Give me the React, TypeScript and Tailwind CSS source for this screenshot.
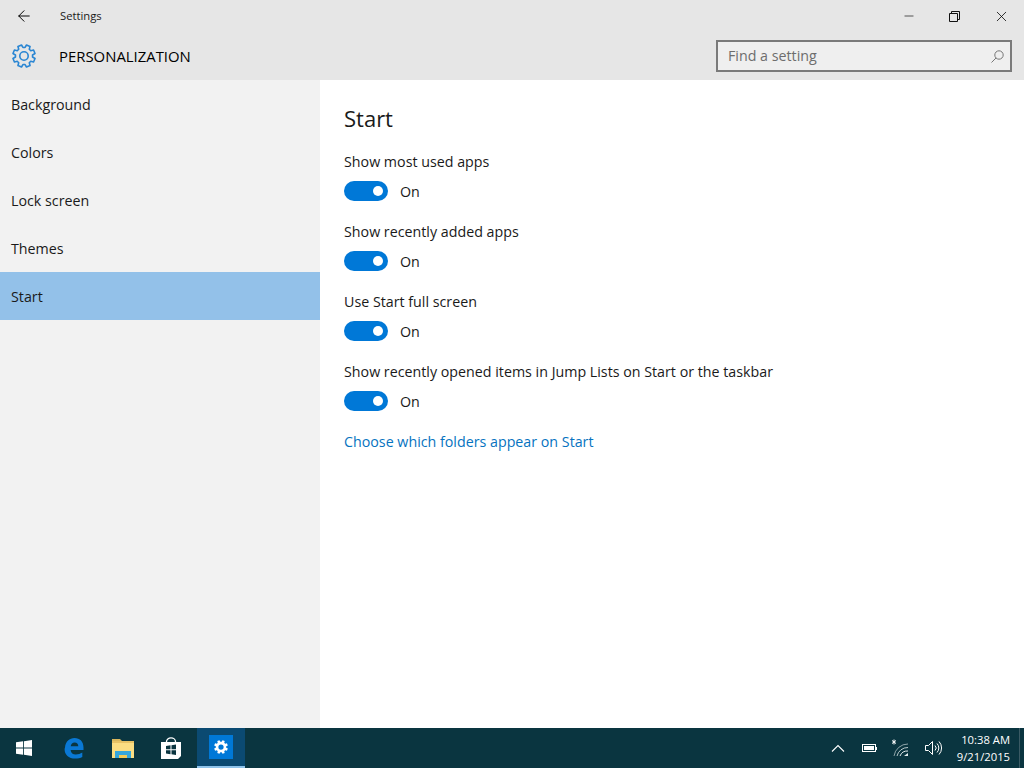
import { ArrowLeft, Minus, X } from "lucide-react";

const font = "font-['Open_Sans','Noto_Sans',sans-serif]";

const navItems = ["Background", "Colors", "Lock screen", "Themes", "Start"];
const toggles = [
  "Show most used apps",
  "Show recently added apps",
  "Use Start full screen",
  "Show recently opened items in Jump Lists on Start or the taskbar",
];

// 8 tooth gear outline, centred on 12,12
function gearPath(outer: number, inner: number) {
  const pts: string[] = [];
  for (let i = 0; i < 8; i++) {
    const a = (i * Math.PI) / 4 + Math.PI / 8;
    const at = (r: number, d: number) =>
      `${(12 + r * Math.cos(a + d)).toFixed(2)} ${(12 + r * Math.sin(a + d)).toFixed(2)}`;
    pts.push(at(inner, -0.27), at(outer, -0.17), at(outer, 0.17), at(inner, 0.27));
  }
  return "M" + pts.join("L") + "Z";
}

function Gear({ size, solid }: { size: number; solid?: boolean }) {
  if (solid) {
    return (
      <svg width={size} height={size} viewBox="0 0 24 24">
        <path d={gearPath(12, 9) + "M12 7.500a4.500 4.500 0 1 0 0 9a4.500 4.500 0 1 0 0-9Z"} fill="#fff" fillRule="evenodd" />
      </svg>
    );
  }
  return (
    <svg width={size} height={size} viewBox="0 0 24 24" fill="none" stroke="#2a86d3" strokeWidth="1.600">
      <path d={gearPath(11.3, 8.6)} strokeLinejoin="round" />
      <circle cx="12" cy="12" r="4.200" />
    </svg>
  );
}

function Toggle({ label }: { label: string }) {
  return (
    <div className="h-[70px] pt-[3px]">
      <div className="h-[22px] text-[14.25px] leading-[22px] text-[#1a1a1a]">{label}</div>
      <div className="mt-[8px] flex h-[20px] items-center gap-3">
        <div className="flex h-[20px] w-[44px] items-center justify-end rounded-full bg-[#0078d7] pr-[5px]">
          <div className="h-[10px] w-[10px] rounded-full bg-white"></div>
        </div>
        <span className="translate-y-[1px] text-[14.25px] leading-[20px] text-[#1a1a1a]">On</span>
      </div>
    </div>
  );
}

function WindowsLogo() {
  return (
    <svg width="16" height="16" viewBox="0 0 17 17" fill="#fff">
      <path d="M0 2.400 7.600 1.300V8H0zM8.500 1.200 17 0v8H8.500zM0 9h7.600v6.700L0 14.600zM8.500 9H17v8l-8.500-1.200z" />
    </svg>
  );
}

function EdgeLogo() {
  return (
    <svg width="20" height="22" viewBox="0 0 20 22">
      <path
        d="M1 10.500C1.500 4.500 5.500 1 10.500 1c5.500 0 9 3.800 9 9.500V13H6.600c.3 3 2.300 4.600 5.200 4.600 2.500 0 4.600-.7 6.500-2v4.300c-2 1.200-4.400 1.700-7 1.700C4.500 21.600.6 17.500.6 12.500c0-.7.1-1.300.4-2z M6.700 9.300h7.600c0-2.300-1.400-3.800-3.600-3.800-2.200 0-3.700 1.500-4 3.800z"
        fill="#0a78d4"
        fillRule="evenodd"
      />
    </svg>
  );
}

function FolderIcon() {
  return (
    <svg width="22" height="19" viewBox="0 0 22 19">
      <path d="M0 0h8l2 2h-10z" fill="#d9b65c" />
      <rect x="0" y="2" width="22" height="17" fill="#fbdd82" />
      <rect x="0" y="2" width="22" height="2" fill="#e8c265" />
      <path d="M3 19v-7h16v7h-4v-3H7v3z" fill="#35a6dc" />
      <rect x="7" y="16" width="8" height="3" fill="#f3c955" />
    </svg>
  );
}

function StoreIcon() {
  return (
    <svg width="22" height="22" viewBox="0 0 22 22">
      <path d="M6.500 6V4.500a4.500 3.700 0 0 1 9 0V6" fill="none" stroke="#fff" strokeWidth="1.300" />
      <path d="M1 5h20v14l-3 3H1z" fill="#fff" />
      <path d="M6 9 10.500 8.300v4H6zM11.500 8.200 16 7.500v4.800h-4.500zM6 13.200h4.500v4L6 16.500zM11.500 13.200H16V18l-4.500-.7z" fill="#0a3540" />
    </svg>
  );
}

function WifiIcon() {
  return (
    <svg width="20" height="20" viewBox="0 0 20 20" fill="none" stroke="#e4ecee" strokeWidth="1">
      <path d="M3 1.500v5M1 2.500l4 3M5 2.500l-4 3" stroke="#fff" />
      <path d="M3 18A14 14 0 0 1 17 6" opacity="0.6" />
      <path d="M6 18A11 11 0 0 1 17 9.500" opacity="0.8" />
      <path d="M9 18a8 8 0 0 1 8-5" />
      <path d="M13 18h4v-3z" fill="#e4ecee" stroke="none" />
    </svg>
  );
}

function VolumeIcon() {
  return (
    <svg width="18" height="16" viewBox="0 0 18 16" fill="none" stroke="#fff" strokeWidth="1">
      <path d="M.5 5.500h3L7.500 1.500v13l-4-4h-3z" />
      <path d="M10 5.500a3.500 3.500 0 0 1 0 5" />
      <path d="M12 3.500a6.500 6.500 0 0 1 0 9" />
      <path d="M14 1.500a9.500 9.500 0 0 1 0 13" />
    </svg>
  );
}

export default function App() {
  return (
    <div className={`flex h-[768px] w-[1024px] flex-col overflow-hidden bg-white ${font}`}>
      <header className="flex h-[80px] flex-col bg-[#e6e6e6]">
        <div className="flex h-[32px] items-center">
          <div className="flex w-[60px] justify-center pr-[12px]">
            <ArrowLeft size={18} strokeWidth={1.3} className="text-black" />
          </div>
          <span className="text-[11.25px] text-[#1a1a1a]">Settings</span>
          <div className="ml-auto flex items-center">
            <div className="flex w-[46px] justify-center"><Minus size={14} strokeWidth={1.1} /></div>
            <div className="flex w-[46px] justify-center pr-[2px]">
              <svg width="11" height="11" viewBox="0 0 11 11" fill="none" stroke="#111" strokeWidth="1">
                <path d="M.5 2.500h8v8h-8zM2.500 2.500v-2h8v8h-2" />
              </svg>
            </div>
            <div className="flex w-[46px] justify-center"><X size={17} strokeWidth={1.1} /></div>
          </div>
        </div>
        <div className="flex h-[48px] items-center">
          <div className="flex w-[59px] justify-center pr-[11px]">
            <Gear size={24} />
          </div>
          <span className="text-[14.9px] font-medium text-black">PERSONALIZATION</span>
          <div className="ml-auto mr-[12px] flex h-[32px] w-[296px] items-center border-2 border-[#7a7a7a] bg-[#efefef] pl-[10px] pr-[6px]">
            <span className="text-[14.25px] text-[#6d6d6d]">Find a setting</span>
            <svg width="13" height="13" viewBox="0 0 13 13" fill="none" stroke="#777" strokeWidth="1" className="ml-auto">
              <circle cx="8" cy="5" r="4.200" />
              <path d="M5 8l-4.500 4.500" />
            </svg>
          </div>
        </div>
      </header>

      <div className="flex flex-1">
        <nav className="w-[320px] bg-[#f2f2f2]">
          {navItems.map((item) => (
            <div
              key={item}
              className={`flex h-[48px] items-center pl-[11px] pt-[2px] text-[14.25px] text-[#1a1a1a] ${item === "Start" ? "bg-[#93c1e9]" : ""}`}
            >
              {item}
            </div>
          ))}
        </nav>
        <main className="flex-1 pl-[24px]">
          <h1 className="mt-[22px] mb-[13px] h-[33px] text-[22px] leading-[33px] text-[#1a1a1a]">Start</h1>
          {toggles.map((t) => (
            <Toggle key={t} label={t} />
          ))}
          <div className="mt-[3px] text-[14.25px] text-[#0673c0]">Choose which folders appear on Start</div>
        </main>
      </div>

      <footer className="flex h-[40px] items-center bg-[#0a3540] text-white">
        <div className="flex h-full w-[48px] items-center justify-center"><WindowsLogo /></div>
        <div className="flex h-full w-[52px] items-center justify-center"><EdgeLogo /></div>
        <div className="flex h-full w-[45px] items-center justify-center"><FolderIcon /></div>
        <div className="flex h-full w-[52px] items-center justify-center"><StoreIcon /></div>
        <div className="flex h-full w-[48px] items-center justify-center border-b-2 border-[#8fc3ea] bg-[#0b4a72]">
          <div className="flex h-[24px] w-[24px] items-center justify-center bg-[#0078d7]">
            <Gear size={14} solid />
          </div>
        </div>
        <div className="ml-auto flex h-full items-center">
          <svg width="14" height="8" viewBox="0 0 14 8" fill="none" stroke="#fff" strokeWidth="1.100" className="mr-[17px]">
            <path d="M1 7.500 7 1.500l6 6" />
          </svg>
          <div className="mr-[14px] flex items-center">
            <div className="flex h-[8px] w-[14px] items-center border border-white p-[1px]">
              <div className="h-full w-full bg-white"></div>
            </div>
            <div className="h-[3px] w-[1px] bg-white"></div>
          </div>
          <div className="mr-[14px]"><WifiIcon /></div>
          <div className="mr-[13px]"><VolumeIcon /></div>
          <div className="mr-[9px] flex w-[54px] flex-col items-end text-[11.25px] leading-[17px]">
            <span>10:38 AM</span>
            <span>9/21/2015</span>
          </div>
          <div className="h-full w-[5px] border-l border-[#3a5a64]"></div>
        </div>
      </footer>
    </div>
  );
}
